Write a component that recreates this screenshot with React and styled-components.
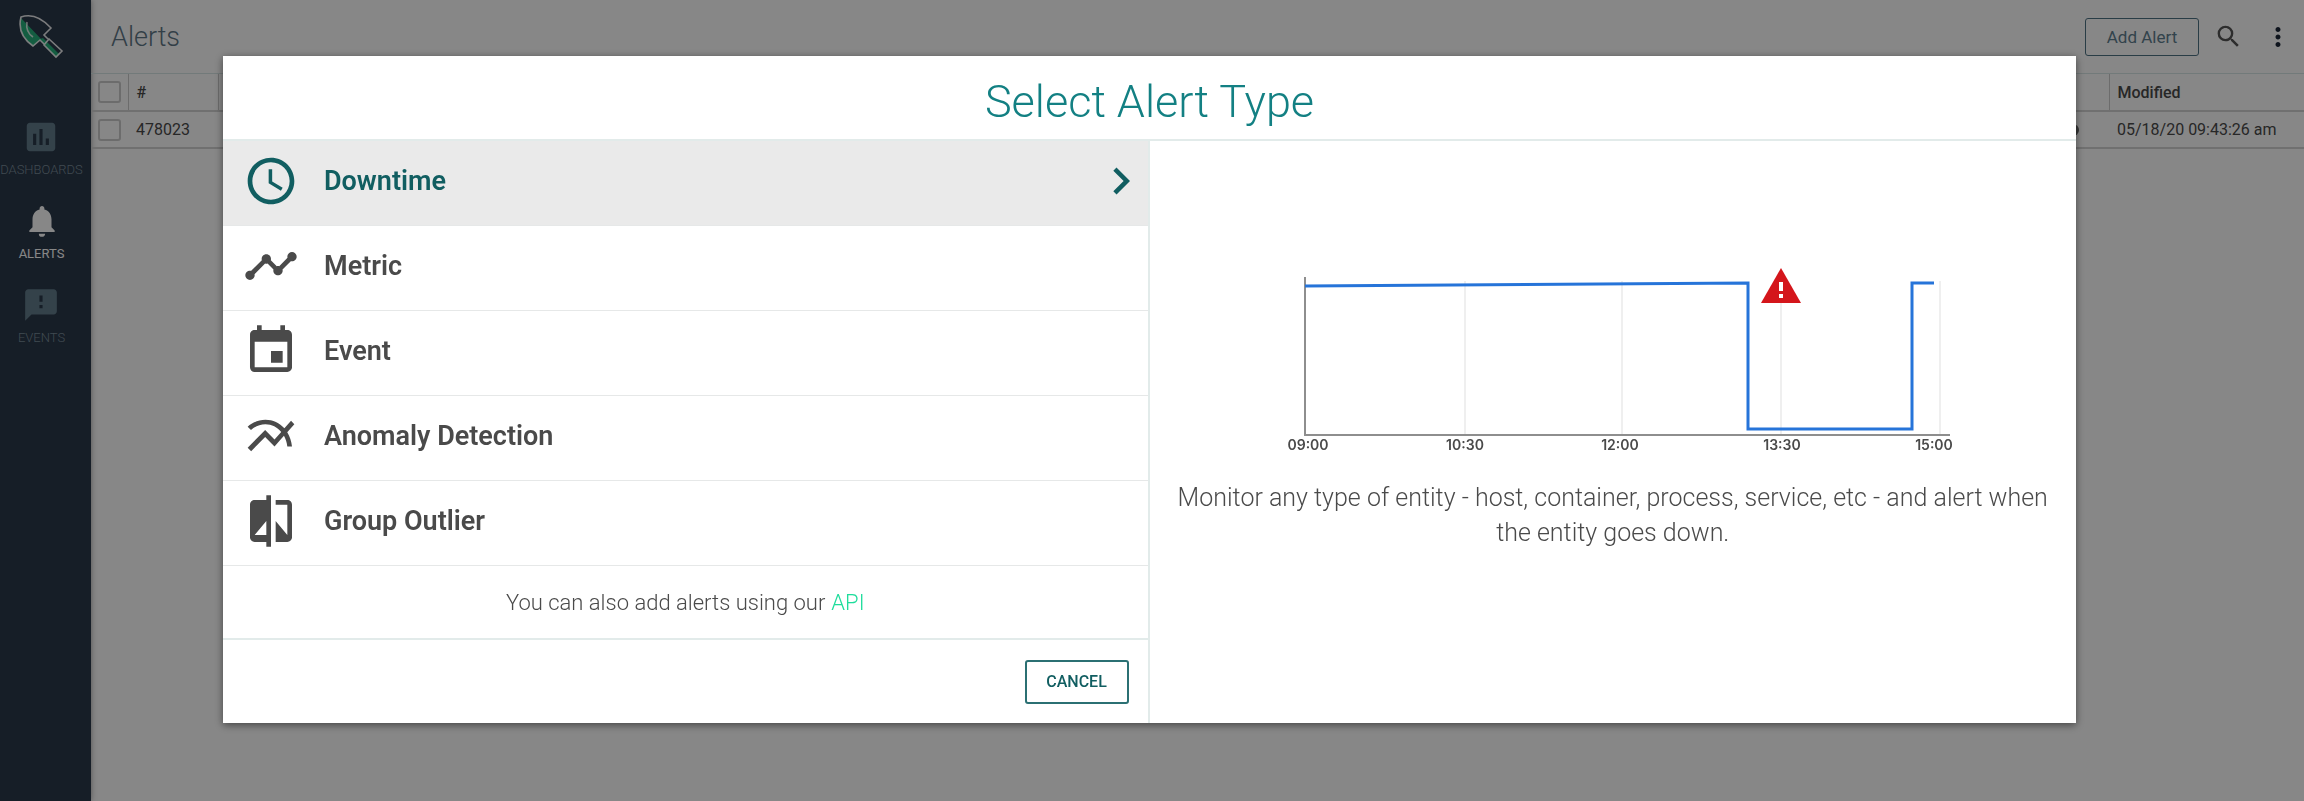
import React from "react";
import styled, { createGlobalStyle } from "styled-components";
import {
  MdInsertChart, MdNotifications, MdFeedback, MdSearch, MdMoreVert,
  MdAccessTime, MdTimeline, MdEvent, MdMultilineChart, MdCompare, MdChevronRight,
} from "react-icons/md";

const GlobalStyle = createGlobalStyle`
  *, *::before, *::after { box-sizing: border-box; }
  html, body, #root { height: 100%; }
  body {
    margin: 0;
    font-family: Roboto, "Liberation Sans", sans-serif;
    font-size: 17px;
    color: #4a4a4a;
    background: #fff;
  }
  button { font-family: inherit; cursor: pointer; }
`;

const Page = styled.div`
  display: flex;
  min-height: 100%;
`;

const Sidebar = styled.nav`
  width: 91px;
  flex: none;
  display: flex;
  flex-direction: column;
  align-items: center;
  padding-right: 8px;
  background: #2a394a;
  box-shadow: 0 0 6px rgba(0, 0, 0, 0.4);
`;

const Logo = styled.a`
  display: block;
  height: 64px;
  padding-top: 14px;
  margin: 0 0 54px;
  svg { display: block; }
`;

const NavItem = styled.a`
  height: 84px;
  display: flex;
  flex-direction: column;
  align-items: center;
  gap: 6px;
  font-size: 13px;
  line-height: 16px;
  font-weight: ${(p) => (p.$active ? 400 : 300)};
  text-decoration: none;
  text-transform: uppercase;
  color: ${(p) => (p.$active ? "#fff" : "#7a8c99")};
  svg { flex: none; color: ${(p) => (p.$active ? "#fff" : "#637d8c")}; }
`;

const Main = styled.main`
  flex: 1;
  min-width: 0;
`;

const TopBar = styled.header`
  height: 74px;
  display: flex;
  align-items: center;
  padding: 0 11px 0 20px;
  border-bottom: 1px solid #d8e6e6;
`;

const PageTitle = styled.h1`
  flex: 1;
  margin: 0;
  font-size: 27px;
  font-weight: 300;
  color: #5f7787;
`;

const AddButton = styled.button`
  height: 38px;
  width: 114px;
  margin-right: 15px;
  padding: 0;
  border: 1px solid #4f7385;
  border-radius: 3px;
  background: transparent;
  color: #5f7f90;
  font-size: 17px;
`;

const IconButton = styled.button`
  display: flex;
  padding: 0;
  margin-left: ${(p) => p.$gap || 0}px;
  border: 0;
  background: transparent;
  color: ${(p) => p.$color};
`;

const Table = styled.table`
  width: 100%;
  table-layout: fixed;
  border-collapse: collapse;
  tr { height: 37px; border-bottom: 2px solid #d4d4d4; }
  th, td { padding: 0 8px; text-align: left; font-size: 16px; white-space: nowrap; }
  th { font-weight: 500; border-right: 1px solid #cdcdcd; }
  th:last-child { border-right: 0; }
`;

const TickBox = styled.input`
  appearance: none;
  display: block;
  width: 23px;
  height: 22px;
  margin: 0 0 0 -1px;
  border: 2px solid #cdcdcd;
  border-radius: 3px;
`;

const Status = styled.div`
  width: 12px;
  height: 12px;
  margin-left: auto;
  margin-right: 22px;
  border-radius: 50%;
  background: #666;
`;

const Overlay = styled.div`
  position: fixed;
  inset: 0;
  padding: 56px 228px 0 223px;
  overflow: auto;
  background: rgba(0, 0, 0, 0.47);
`;

const Dialog = styled.section`
  background: #fff;
  box-shadow: 0 2px 8px rgba(0, 0, 0, 0.5);
`;

const DialogHeader = styled.header`
  height: 85px;
  display: flex;
  align-items: center;
  justify-content: center;
  padding-top: 8px;
  border-bottom: 2px solid #e2ebea;
`;

const DialogTitle = styled.h2`
  margin: 0;
  font-size: 45px;
  line-height: 54px;
  font-weight: 300;
  color: #138083;
`;

const DialogBody = styled.div`
  display: grid;
  grid-template-columns: 1fr 1fr;
`;

const Choices = styled.div`
  border-right: 2px solid #e2ebea;
`;

const Choice = styled.button`
  width: 100%;
  height: 85px;
  display: flex;
  align-items: center;
  gap: 25px;
  padding: 0 0 5px 20px;
  border: 0;
  border-bottom: 1px solid #e6e8e8;
  background: ${(p) => (p.$selected ? "#eaeaea" : "#fff")};
  color: ${(p) => (p.$selected ? "#115e61" : "#4a4a4a")};
  font-size: 27px;
  line-height: 30px;
  font-weight: 600;
  text-align: left;
  svg { flex: none; }
`;

const ChoiceLabel = styled.span`
  flex: 1;
`;

const ApiNote = styled.p`
  height: 74px;
  margin: 0;
  display: flex;
  align-items: center;
  justify-content: center;
  gap: 6px;
  font-size: 22px;
  font-weight: 300;
  border-bottom: 2px solid #e2ebea;
  a { color: #1fdd9c; text-decoration: none; }
`;

const Actions = styled.footer`
  height: 83px;
  display: flex;
  align-items: center;
  justify-content: flex-end;
  padding-right: 19px;
`;

const CancelButton = styled.button`
  width: 104px;
  height: 44px;
  padding: 0;
  border: 2px solid #2b7073;
  border-radius: 3px;
  background: #fff;
  color: #115e61;
  font-size: 16px;
  font-weight: 500;
`;

const Preview = styled.div`
  display: flex;
  flex-direction: column;
  align-items: center;
  padding-top: 120px;
`;

const ChartFigure = styled.figure`
  width: 678px;
  max-width: 100%;
  margin: 0;
  svg { display: block; width: 100%; }
`;

const AxisLabel = styled.text`
  font-family: Inter, sans-serif;
  font-size: 14px;
  font-weight: 600;
  fill: #4a4a4a;
  text-anchor: middle;
`;

const Description = styled.p`
  margin: 25px 24px 0;
  font-size: 25px;
  line-height: 35px;
  font-weight: 300;
  text-align: center;
`;

const NAV = [
  { label: "Dashboards", Icon: MdInsertChart },
  { label: "Alerts", Icon: MdNotifications, active: true },
  { label: "Events", Icon: MdFeedback },
];

const TYPES = [
  { label: "Downtime", Icon: MdAccessTime },
  { label: "Metric", Icon: MdTimeline },
  { label: "Event", Icon: MdEvent },
  { label: "Anomaly Detection", Icon: MdMultilineChart },
  { label: "Group Outlier", Icon: MdCompare },
];

const TICKS = [
  { x: 24, label: "09:00" },
  { x: 181, label: "10:30" },
  { x: 336, label: "12:00" },
  { x: 498, label: "13:30" },
  { x: 650, label: "15:00" },
];

function ShovelLogo() {
  return (
    <svg width="47" height="46" viewBox="0 0 47 46" fill="none">
      <path d="M3 4L25 27L22 26L15 32C5 25 1 15 3 4Z" fill="#27b07c" />
      <path d="M22 25L25 24L30 29L41 40L38 43L26 31Z" fill="#27b07c" />
      <path d="M30 25L26 21L33 14C22 2 12 0 3 3C0 15 5 25 15 32L22 26L26 30" stroke="#fff" strokeOpacity="0.9" strokeWidth="1.6" />
      <path d="M31 25L44 37L38 43L26 31Z" stroke="#fff" strokeOpacity="0.9" strokeWidth="1.6" />
      <path d="M9 8C8 14 9 19 15 23" stroke="#fff" strokeOpacity="0.8" strokeWidth="1.6" />
    </svg>
  );
}

function DowntimeChart() {
  return (
    <ChartFigure>
      <svg viewBox="-10 0 678 194" role="img" aria-label="Downtime example chart">
        <path d="M181 20V174M338 20V174M497 42V174M656 20V174" stroke="#efefef" strokeWidth="2" />
        <path d="M21 16V174H666" fill="none" stroke="#8e8e8e" strokeWidth="2" />
        <path d="M21 25L464 22V168H628V22H650" fill="none" stroke="#2674d9" strokeWidth="3" />
        <path d="M497 7L517 42H477Z" fill="#d4151b" />
        <path d="M495 21h4v9h-4zM495 33h4v4h-4z" fill="#fff" />
        {TICKS.map((t) => (
          <AxisLabel key={t.label} x={t.x} y="189">{t.label}</AxisLabel>
        ))}
      </svg>
    </ChartFigure>
  );
}

export default function App() {
  return (
    <>
      <GlobalStyle />
      <Page>
        <Sidebar>
          <Logo href="#" aria-label="Home"><ShovelLogo /></Logo>
          {NAV.map(({ label, Icon, active }) => (
            <NavItem key={label} href="#" $active={active}>
              <Icon size={38} />
              {label}
            </NavItem>
          ))}
        </Sidebar>
        <Main>
          <TopBar>
            <PageTitle>Alerts</PageTitle>
            <AddButton>Add Alert</AddButton>
            <IconButton $color="#555" aria-label="Search"><MdSearch size={29} /></IconButton>
            <IconButton $color="#1b2638" $gap={20} aria-label="More"><MdMoreVert size={30} /></IconButton>
          </TopBar>
          <Table>
            <colgroup>
              <col style={{ width: 37 }} />
              <col style={{ width: 90 }} />
              <col />
              <col style={{ width: 195 }} />
            </colgroup>
            <thead>
              <tr>
                <th><TickBox type="checkbox" aria-label="Select all" /></th>
                <th>#</th>
                <th />
                <th>Modified</th>
              </tr>
            </thead>
            <tbody>
              <tr>
                <td><TickBox type="checkbox" aria-label="Select alert 478023" /></td>
                <td>478023</td>
                <td><Status /></td>
                <td>05/18/20 09:43:26 am</td>
              </tr>
            </tbody>
          </Table>
        </Main>
      </Page>
      <Overlay>
        <Dialog role="dialog" aria-modal="true" aria-labelledby="dialog-title">
          <DialogHeader>
            <DialogTitle id="dialog-title">Select Alert Type</DialogTitle>
          </DialogHeader>
          <DialogBody>
            <Choices>
              {TYPES.map(({ label, Icon }, i) => (
                <Choice key={label} $selected={i === 0}>
                  <Icon size={56} />
                  <ChoiceLabel>{label}</ChoiceLabel>
                  {i === 0 && <MdChevronRight size={54} />}
                </Choice>
              ))}
              <ApiNote>
                <span>You can also add alerts using our</span>
                <a href="#">API</a>
              </ApiNote>
              <Actions>
                <CancelButton>CANCEL</CancelButton>
              </Actions>
            </Choices>
            <Preview>
              <DowntimeChart />
              <Description>
                Monitor any type of entity - host, container, process, service, etc - and alert when the entity goes down.
              </Description>
            </Preview>
          </DialogBody>
        </Dialog>
      </Overlay>
    </>
  );
}
